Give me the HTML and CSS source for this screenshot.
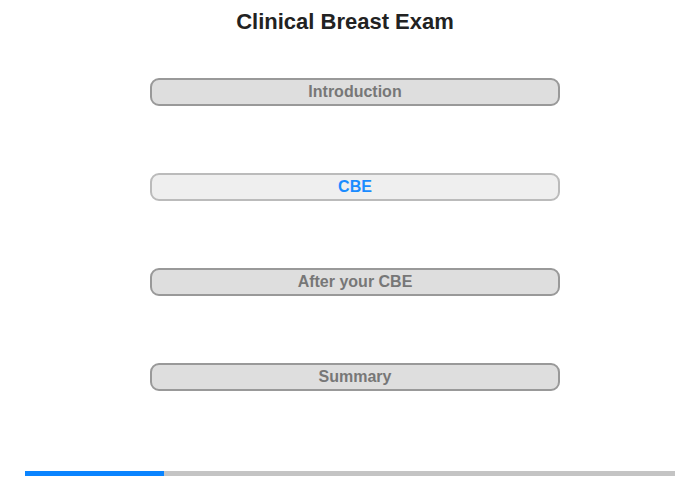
FILE: index.html
```html
<!DOCTYPE html>
<html>
<head>
<meta charset="utf-8">
<link rel="stylesheet" href="styles.css">
</head>
<body>
<div class="page">
  <h1 class="title">Clinical Breast Exam</h1>
  <div class="menu">
    <div class="btn">Introduction</div>
    <div class="btn active">CBE</div>
    <div class="btn">After your CBE</div>
    <div class="btn">Summary</div>
  </div>
  <div class="progress"><div class="progress-fill" style="width:139px"></div></div>
</div>
</body>
</html>
```
FILE: styles.css
```css
html, body {
  margin: 0;
  padding: 0;
  background: #fff;
  font-family: "Liberation Sans", Arial, sans-serif;
}
.page {
  width: 700px;
  height: 480px;
  display: flex;
  flex-direction: column;
}
.title {
  margin: 9px 0 0 0;
  padding-right: 10px;
  font-size: 22px;
  line-height: 26px;
  font-weight: bold;
  color: #222;
  text-align: center;
}
.menu {
  margin-top: 43px;
  display: flex;
  flex-direction: column;
  gap: 67px;
  padding-left: 150px;
}
.btn {
  box-sizing: border-box;
  width: 410px;
  height: 28px;
  border: 2px solid #999;
  border-radius: 9px;
  background: #dedede;
  color: #777;
  font-size: 16px;
  font-weight: bold;
  line-height: 24px;
  text-align: center;
}
.btn.active {
  border-color: #bbb;
  background: #efefef;
  color: #1a8cff;
}
.progress {
  margin: 80px 0 0 25px;
  width: 650px;
  height: 5px;
  background: #c4c4c4;
}
.progress-fill {
  height: 100%;
  background: #0a84ff;
}
```
